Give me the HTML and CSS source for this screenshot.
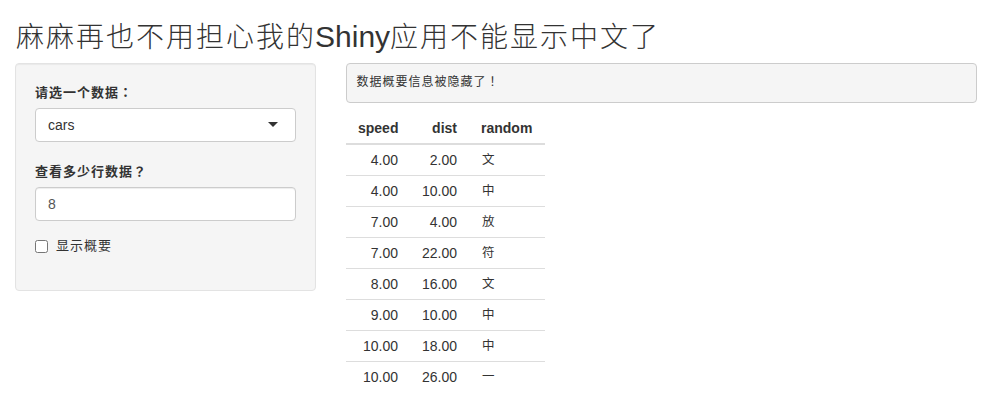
FILE: index.html
```html
<!DOCTYPE html>
<html lang="zh-CN">
<head>
<meta charset="utf-8">
<title>Shiny</title>
<link rel="stylesheet" href="styles.css">
</head>
<body>
<div class="container">
  <h2 class="title"><span class="zh">麻麻再也不用担心我的</span>Shiny<span class="zh">应用不能显示中文了</span></h2>
  <div class="row">
    <form class="well">
      <div class="group">
        <label class="zh-label" for="dataset">请选一个数据<span class="punct" lang="zh-TW">：</span></label>
        <div class="control select" id="dataset"><span>cars</span><i class="caret"></i></div>
      </div>
      <div class="group">
        <label class="zh-label" for="obs">查看多少行数据<span class="punct" lang="zh-TW">？</span></label>
        <input class="control number" id="obs" type="text" value="8">
      </div>
      <label class="check"><input type="checkbox"><span class="check-text">显示概要</span></label>
    </form>
    <main class="main">
      <pre class="summary">数据概要信息被隐藏了<span class="punct" lang="zh-TW">！</span></pre>
      <table class="table">
        <colgroup><col class="speed"><col class="dist"><col class="random"></colgroup>
        <thead><tr><th>speed</th><th>dist</th><th class="left">random</th></tr></thead>
        <tbody>
          <tr><td>4.00</td><td>2.00</td><td class="left">文</td></tr>
          <tr><td>4.00</td><td>10.00</td><td class="left">中</td></tr>
          <tr><td>7.00</td><td>4.00</td><td class="left">放</td></tr>
          <tr><td>7.00</td><td>22.00</td><td class="left">符</td></tr>
          <tr><td>8.00</td><td>16.00</td><td class="left">文</td></tr>
          <tr><td>9.00</td><td>10.00</td><td class="left">中</td></tr>
          <tr><td>10.00</td><td>18.00</td><td class="left">中</td></tr>
          <tr><td>10.00</td><td>26.00</td><td class="left">一</td></tr>
        </tbody>
      </table>
    </main>
  </div>
</div>
</body>
</html>
```
FILE: styles.css
```css
* { box-sizing: border-box; }
html { overflow: hidden; }
body {
  margin: 0;
  font: 14px/20px "Liberation Sans", "AR PL UKai CN", KaiTi, "Noto Sans CJK SC", sans-serif;
  color: #333;
  background: #fff;
}
.container { padding: 0 15px; }
.title { height: 33px; margin: 20px 0 10px; font-size: 30px; font-weight: 400; line-height: 33px; white-space: nowrap; }
.title .zh { font-size: 28px; font-weight: 300; letter-spacing: 2px; line-height: 1; }
.title .zh:first-child { padding-left: 1px; margin-right: -1px; }
.row { display: flex; gap: 30px; align-items: flex-start; }
.well {
  width: 301px;
  height: 228px;
  margin: 0;
  padding: 19px;
  background: #f5f5f5;
  border: 1px solid #e3e3e3;
  border-radius: 4px;
  box-shadow: inset 0 1px 1px rgba(0,0,0,.05);
}
.group { margin-bottom: 20px; }
.group + .check { margin-top: -5px; }
.zh-label { display: block; height: 20px; margin-bottom: 5px; font-size: 13px; letter-spacing: 1px; font-weight: 700; white-space: nowrap; }
.punct { font-family: "Noto Sans CJK TC", sans-serif; line-height: 1; }
.control {
  display: flex;
  align-items: center;
  width: 100%;
  height: 34px;
  padding: 6px 12px;
  background: #fff;
  border: 1px solid #ccc;
  border-radius: 4px;
  font: 14px/20px "Liberation Sans", sans-serif;
}
.select { justify-content: space-between; }
.number { color: #555; box-shadow: inset 0 1px 1px rgba(0,0,0,.075); }
.caret { width: 0; margin: 0 5px 1px 0; border: 5px solid transparent; border-top-color: #333; border-bottom: 0; }
.check { display: flex; align-items: center; gap: 8px; line-height: 20px; }
.check input { width: 13px; height: 13px; margin: 0; }
.check-text { font-size: 13px; letter-spacing: 1px; font-weight: 400; }
.main { flex: 1; }
.summary {
  height: 40px;
  margin: 0 0 10px;
  padding: 8px 9.5px;
  background: #f5f5f5;
  border: 1px solid #ccc;
  border-radius: 4px;
  font: 400 12px/18px "AR PL UKai CN", KaiTi, "Noto Sans CJK SC", sans-serif;
  letter-spacing: 1px;
}
.table { width: 199px; table-layout: fixed; border-collapse: collapse; }
.speed { width: 64px; }
.dist { width: 59px; }
.random { width: 76px; }
.table th, .table td { height: 31px; padding: 5px 12px; text-align: right; line-height: 20px; border-top: 1px solid #ddd; }
.table th { border-top: 0; border-bottom: 2px solid #ddd; }
.table .left { text-align: left; }
.table td.left { padding-left: 13px; font-size: 12.5px; font-weight: 400; }
```
